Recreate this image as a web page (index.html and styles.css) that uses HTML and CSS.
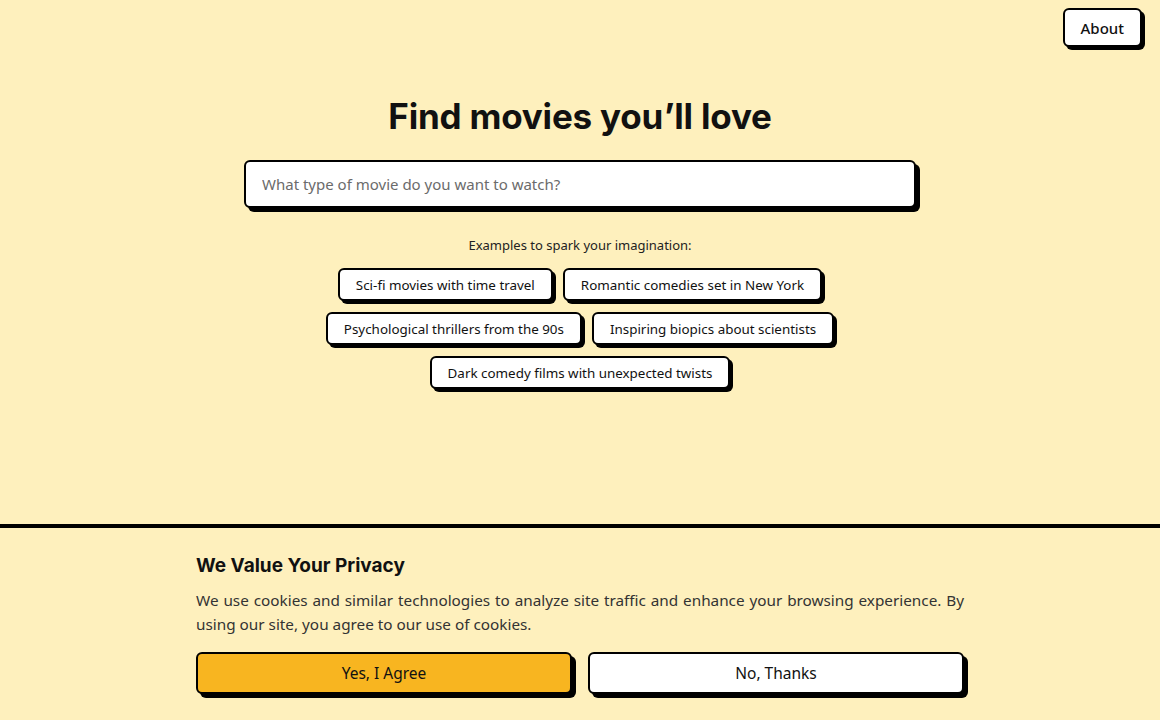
FILE: index.html
```html
<!DOCTYPE html>
<html lang="en">
<head>
<meta charset="utf-8">
<title>Find movies you'll love</title>
<link rel="stylesheet" href="styles.css">
</head>
<body>
<header class="topbar">
  <button class="btn about">About</button>
</header>
<main class="hero">
  <h1 class="title">Find movies you’ll love</h1>
  <div class="search">
    <input class="search-input" type="text" placeholder="What type of movie do you want to watch?">
  </div>
  <p class="examples-label">Examples to spark your imagination:</p>
  <div class="chips">
    <button class="chip">Sci-fi movies with time travel</button>
    <button class="chip">Romantic comedies set in New York</button>
    <button class="chip">Psychological thrillers from the 90s</button>
    <button class="chip">Inspiring biopics about scientists</button>
    <button class="chip">Dark comedy films with unexpected twists</button>
  </div>
</main>
<section class="cookie">
  <div class="cookie-inner">
    <h2 class="cookie-title">We Value Your Privacy</h2>
    <p class="cookie-text">We use cookies and similar technologies to analyze site traffic and enhance your browsing experience. By using our site, you agree to our use of cookies.</p>
    <div class="cookie-actions">
      <button class="btn cookie-btn agree">Yes, I Agree</button>
      <button class="btn cookie-btn decline">No, Thanks</button>
    </div>
  </div>
</section>
</body>
</html>
```
FILE: styles.css
```css
* { box-sizing: border-box; }
html, body { margin: 0; padding: 0; }
body {
  background: #fef0bd;
  color: #111;
  font-family: "Noto Sans", "Lato", sans-serif;
  height: 720px;
  overflow: hidden;
}
button { font-family: inherit; cursor: pointer; }

.topbar {
  display: flex;
  justify-content: flex-end;
  padding: 8px 18px 0 0;
}
.btn {
  background: #fff;
  color: #111;
  border: 2px solid #000;
  border-radius: 6px;
  box-shadow: 3px 3px 0 #000;
}
.about {
  font-size: 15px;
  font-weight: 500;
  padding: 0 16px;
  height: 39px;
}

.hero {
  display: flex;
  flex-direction: column;
  align-items: center;
  padding-top: 49px;
}
.title {
  font-family: "Inter", "Liberation Sans", sans-serif;
  font-weight: 700;
  font-size: 35px;
  line-height: 40px;
  letter-spacing: -0.2px;
  margin: 0;
}
.search { margin-top: 24px; width: 672px; }
.search-input {
  width: 100%;
  height: 48px;
  border: 2px solid #000;
  border-radius: 6px;
  background: #fff;
  box-shadow: 4px 4px 0 #000;
  padding: 0 16px;
  font-family: inherit;
  font-size: 15px;
  color: #111;
  outline: none;
}
.search-input::placeholder { color: #6b6b6b; }

.examples-label {
  margin: 27px 0 0;
  font-size: 13px;
  line-height: 20px;
  color: #222;
}
.chips {
  margin-top: 13px;
  width: 672px;
  display: flex;
  flex-wrap: wrap;
  justify-content: center;
  gap: 11px 10px;
}
.chip {
  height: 33px;
  padding: 0 16px;
  background: #fff;
  border: 2px solid #000;
  border-radius: 6px;
  box-shadow: 3px 3px 0 #000;
  font-size: 13.4px;
  color: #111;
}

.cookie {
  position: fixed;
  left: 0;
  right: 0;
  bottom: 0;
  height: 196px;
  background: #fef0bd;
  border-top: 4px solid #000;
}
.cookie-inner {
  width: 768px;
  margin: 0 auto;
  padding-top: 24px;
}
.cookie-title {
  font-family: "Inter", "Liberation Sans", sans-serif;
  font-weight: 700;
  font-size: 19px;
  line-height: 28px;
  margin: 0;
}
.cookie-text {
  margin: 8px 0 0;
  font-size: 15.3px;
  line-height: 24px;
  color: #333;
  text-align: justify;
}
.cookie-actions {
  margin-top: 16px;
  display: flex;
  gap: 16px;
}
.cookie-btn {
  flex: 1;
  height: 42px;
  font-size: 15.5px;
  box-shadow: 4px 4px 0 #000;
}
.agree { background: #f8b520; }
```
